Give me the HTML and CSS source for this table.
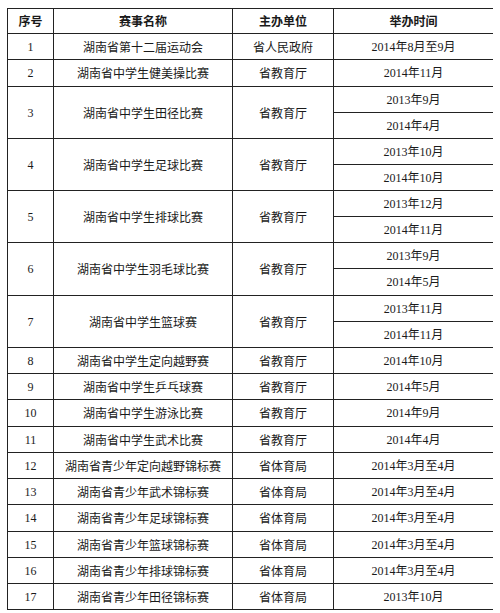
FILE: index.html
```html
<!DOCTYPE html>
<html lang="zh-CN">
<head>
<meta charset="utf-8">
<link rel="stylesheet" href="styles.css">
</head>
<body>
<table class="events">
  <colgroup>
    <col class="c-no"><col class="c-name"><col class="c-org"><col class="c-time">
  </colgroup>
  <thead>
    <tr class="head"><th>序号</th><th>赛事名称</th><th>主办单位</th><th>举办时间</th></tr>
  </thead>
  <tbody>
    <tr><td>1</td><td>湖南省第十二届运动会</td><td>省人民政府</td><td>2014年8月至9月</td></tr>
    <tr class="tall"><td>2</td><td>湖南省中学生健美操比赛</td><td>省教育厅</td><td>2014年11月</td></tr>
    <tr><td rowspan="2">3</td><td rowspan="2">湖南省中学生田径比赛</td><td rowspan="2">省教育厅</td><td>2013年9月</td></tr>
    <tr><td>2014年4月</td></tr>
    <tr><td rowspan="2">4</td><td rowspan="2">湖南省中学生足球比赛</td><td rowspan="2">省教育厅</td><td>2013年10月</td></tr>
    <tr><td>2014年10月</td></tr>
    <tr><td rowspan="2">5</td><td rowspan="2">湖南省中学生排球比赛</td><td rowspan="2">省教育厅</td><td>2013年12月</td></tr>
    <tr><td>2014年11月</td></tr>
    <tr><td rowspan="2">6</td><td rowspan="2">湖南省中学生羽毛球比赛</td><td rowspan="2">省教育厅</td><td>2013年9月</td></tr>
    <tr class="tall"><td>2014年5月</td></tr>
    <tr><td rowspan="2">7</td><td rowspan="2">湖南省中学生篮球赛</td><td rowspan="2">省教育厅</td><td>2013年11月</td></tr>
    <tr><td>2014年11月</td></tr>
    <tr><td>8</td><td>湖南省中学生定向越野赛</td><td>省教育厅</td><td>2014年10月</td></tr>
    <tr><td>9</td><td>湖南省中学生乒乓球赛</td><td>省教育厅</td><td>2014年5月</td></tr>
    <tr class="tall"><td>10</td><td>湖南省中学生游泳比赛</td><td>省教育厅</td><td>2014年9月</td></tr>
    <tr><td>11</td><td>湖南省中学生武术比赛</td><td>省教育厅</td><td>2014年4月</td></tr>
    <tr><td>12</td><td>湖南省青少年定向越野锦标赛</td><td>省体育局</td><td>2014年3月至4月</td></tr>
    <tr><td>13</td><td>湖南省青少年武术锦标赛</td><td>省体育局</td><td>2014年3月至4月</td></tr>
    <tr class="tall"><td>14</td><td>湖南省青少年足球锦标赛</td><td>省体育局</td><td>2014年3月至4月</td></tr>
    <tr><td>15</td><td>湖南省青少年篮球锦标赛</td><td>省体育局</td><td>2014年3月至4月</td></tr>
    <tr><td>16</td><td>湖南省青少年排球锦标赛</td><td>省体育局</td><td>2014年3月至4月</td></tr>
    <tr><td>17</td><td>湖南省青少年田径锦标赛</td><td>省体育局</td><td>2013年10月</td></tr>
  </tbody>
</table>
</body>
</html>
```

FILE: styles.css
```css
html, body {
  background: #ffffff;
}
body {
  margin: 8px 7px;
  font-family: "Liberation Serif", "Noto Sans CJK SC", serif;
  font-size: 12px;
  color: #1a1a1a;
}
.events {
  border-collapse: collapse;
  table-layout: fixed;
  width: 486px;
  border: 1px solid #222;
  box-shadow: 1px 1px 0 #999;
}
.c-no { width: 46px; }
.c-name { width: 179px; }
.c-org { width: 101px; }
.c-time { width: 160px; }
.events th,
.events td {
  border: 1px solid #222;
  padding: 0;
  text-align: center;
  vertical-align: middle;
  line-height: 14px;
  height: 25px;
  white-space: nowrap;
}
.events .tall td {
  height: 26px;
}
.events th {
  font-family: "Noto Sans CJK SC", sans-serif;
  font-weight: bold;
  font-size: 12px;
  height: 24px;
}
.events td:nth-child(2),
.events td:nth-child(3) {
  font-family: "Noto Sans CJK SC", sans-serif;
}
```
